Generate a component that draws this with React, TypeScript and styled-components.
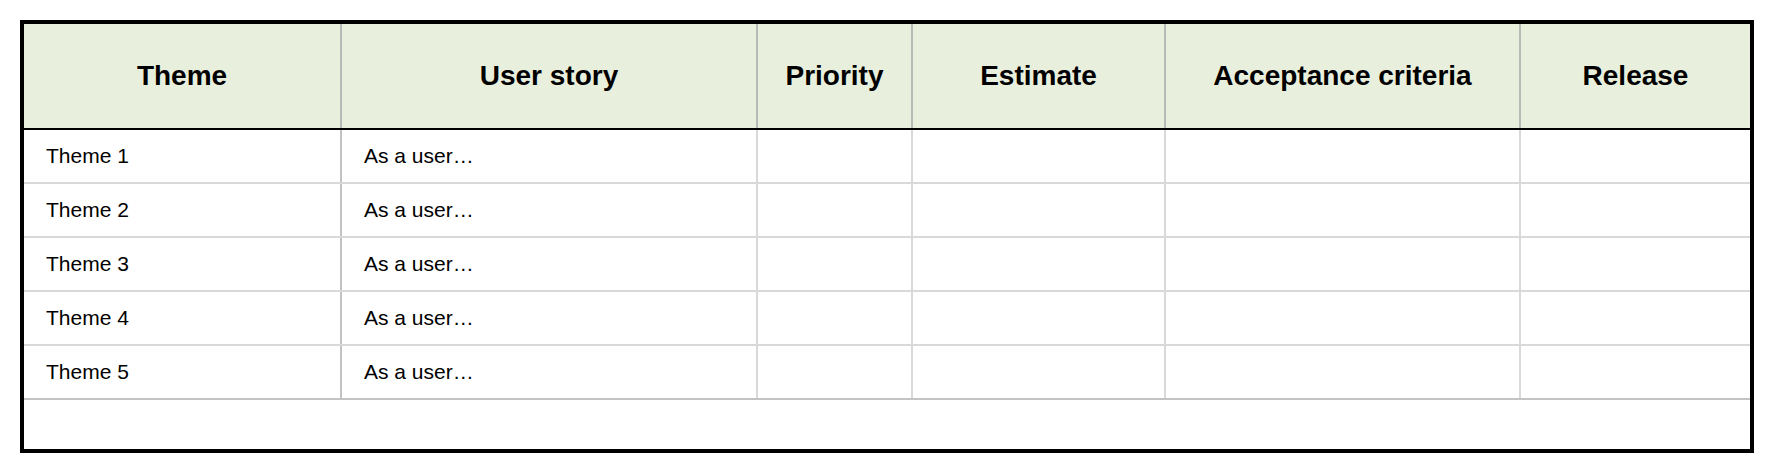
import React from "react";
import styled, { createGlobalStyle } from "styled-components";

const GlobalStyle = createGlobalStyle`
  html, body {
    margin: 0;
    padding: 0;
    background: #ffffff;
  }
  body {
    font-family: "Liberation Sans", Arial, sans-serif;
    color: #000000;
  }
`;

const COLS = "318px 416px 155px 253px 355px 229px";

const Page = styled.div`
  padding: 20px;
  width: 1772px;
  box-sizing: border-box;
`;

const Sheet = styled.div`
  width: 1734px;
  box-sizing: border-box;
  border: 4px solid #000000;
  display: flex;
  flex-direction: column;
`;

const HeaderRow = styled.div`
  display: grid;
  grid-template-columns: ${COLS};
  height: 106px;
  box-sizing: border-box;
  background: #e9efdd;
  border-bottom: 2px solid #000000;
`;

const HeaderCell = styled.div<{ $last?: boolean }>`
  display: flex;
  align-items: center;
  justify-content: center;
  font-size: 28px;
  font-weight: 700;
  border-right: ${(p) => (p.$last ? "none" : "2px solid #b9b9b9")};
  white-space: nowrap;
`;

const BodyRow = styled.div<{ $last?: boolean }>`
  display: grid;
  grid-template-columns: ${COLS};
  height: 54px;
  box-sizing: border-box;
  border-bottom: 2px solid ${(p) => (p.$last ? "#c3c3c3" : "#d9d9d9")};
`;

const BodyCell = styled.div<{ $divider?: "strong" | "light" | "none" }>`
  display: flex;
  align-items: center;
  padding-left: 22px;
  font-size: 21px;
  white-space: nowrap;
  border-right: ${(p) =>
    p.$divider === "none"
      ? "none"
      : p.$divider === "strong"
      ? "2px solid #c3c3c3"
      : "2px solid #d9d9d9"};
`;

const EmptyRow = styled.div`
  height: 49px;
`;

const headers = [
  "Theme",
  "User story",
  "Priority",
  "Estimate",
  "Acceptance criteria",
  "Release",
];

const rows = [1, 2, 3, 4, 5].map((n) => ({
  theme: `Theme ${n}`,
  story: "As a user…",
}));

export default function App() {
  return (
    <>
      <GlobalStyle />
      <Page>
        <Sheet>
          <HeaderRow>
            {headers.map((h, i) => (
              <HeaderCell key={h} $last={i === headers.length - 1}>
                {h}
              </HeaderCell>
            ))}
          </HeaderRow>
          {rows.map((r, idx) => (
            <BodyRow key={r.theme} $last={idx === rows.length - 1}>
              <BodyCell $divider="strong">{r.theme}</BodyCell>
              <BodyCell $divider="light">{r.story}</BodyCell>
              <BodyCell $divider="light" />
              <BodyCell $divider="light" />
              <BodyCell $divider="light" />
              <BodyCell $divider="none" />
            </BodyRow>
          ))}
          <EmptyRow />
        </Sheet>
      </Page>
    </>
  );
}
